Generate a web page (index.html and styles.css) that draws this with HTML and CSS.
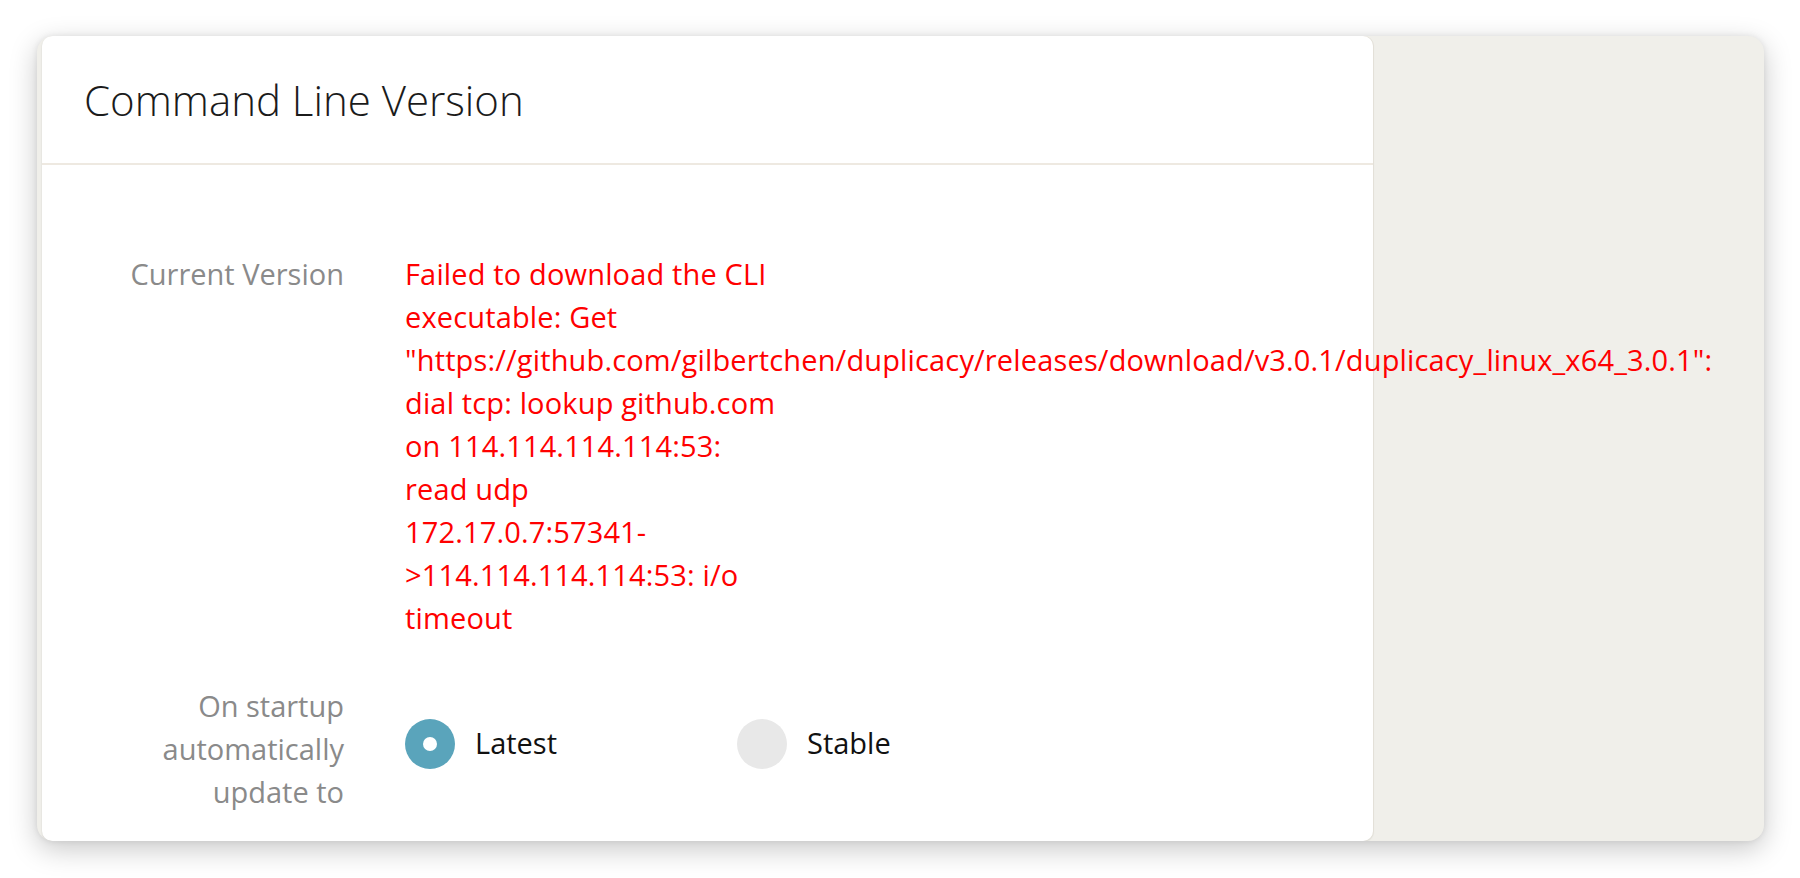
FILE: index.html
```html
<!DOCTYPE html>
<html lang="en">
<head>
<meta charset="utf-8">
<title>Command Line Version</title>
<link rel="stylesheet" href="styles.css">
</head>
<body>
<div class="window">
  <div class="card">
    <div class="header">
      <h1 class="title">Command Line Version</h1>
    </div>
    <div class="form">
      <div class="label">Current Version</div>
      <div class="value error">Failed to download the CLI<br>executable: Get<br>"https://github.com/gilbertchen/duplicacy/releases/download/v3.0.1/duplicacy_linux_x64_3.0.1":<br>dial tcp: lookup github.com<br>on 114.114.114.114:53:<br>read udp<br>172.17.0.7:57341-<br>&gt;114.114.114.114:53: i/o<br>timeout</div>
      <div class="label">On startup<br>automatically<br>update to</div>
      <div class="value radios">
        <label class="radio">
          <span class="dot checked"></span>
          <span class="radio-text">Latest</span>
        </label>
        <label class="radio">
          <span class="dot"></span>
          <span class="radio-text">Stable</span>
        </label>
      </div>
    </div>
  </div>
  <div class="side"></div>
</div>
</body>
</html>
```
FILE: styles.css
```css
* { box-sizing: border-box; }
html, body { margin: 0; padding: 0; background: #ffffff; }
body {
  font-family: "Open Sans", "Lato", sans-serif;
  width: 1800px;
  height: 878px;
  overflow: hidden;
}
.window {
  margin: 36px 0 0 37px;
  width: 1727px;
  height: 805px;
  background: #f0efea;
  border-radius: 16px;
  box-shadow: 0 8px 28px rgba(0, 0, 0, 0.22), 0 0 6px rgba(0, 0, 0, 0.08);
  display: flex;
  overflow: hidden;
}
.card {
  margin-left: 5px;
  width: 1331px;
  height: 100%;
  background: #ffffff;
  border-radius: 10px;
  box-shadow: 1px 0 0 #e3e0d8, 0 1px 2px rgba(0, 0, 0, 0.12);
  display: flex;
  flex-direction: column;
}
.header {
  height: 129px;
  padding-left: 42px;
  display: flex;
  align-items: center;
  border-bottom: 2px solid #eee9e1;
}
.title {
  margin: 0;
  font-size: 42px;
  font-weight: 300;
  color: #1b1b1b;
}
.form {
  padding-top: 87px;
  display: grid;
  grid-template-columns: 302px 1fr;
  column-gap: 61px;
  row-gap: 45px;
  font-size: 29px;
  line-height: 43px;
}
.label {
  text-align: right;
  color: #8a8a8a;
}
.error {
  color: #ff0000;
  white-space: nowrap;
  letter-spacing: 0.15px;
}
.radios {
  display: flex;
  align-items: flex-start;
  padding-top: 35px;
}
.radio {
  width: 332px;
  display: flex;
  align-items: center;
  gap: 20px;
  color: #111111;
}
.radio-text {
  margin-top: -4px;
}
.dot {
  width: 50px;
  height: 50px;
  border-radius: 50%;
  background: #e8e8e8;
  display: flex;
  align-items: center;
  justify-content: center;
}
.dot.checked {
  background: #5aa4bb;
}
.dot.checked::after {
  content: "";
  width: 14px;
  height: 14px;
  border-radius: 50%;
  background: #ffffff;
}
.side { flex: 1; }
```
